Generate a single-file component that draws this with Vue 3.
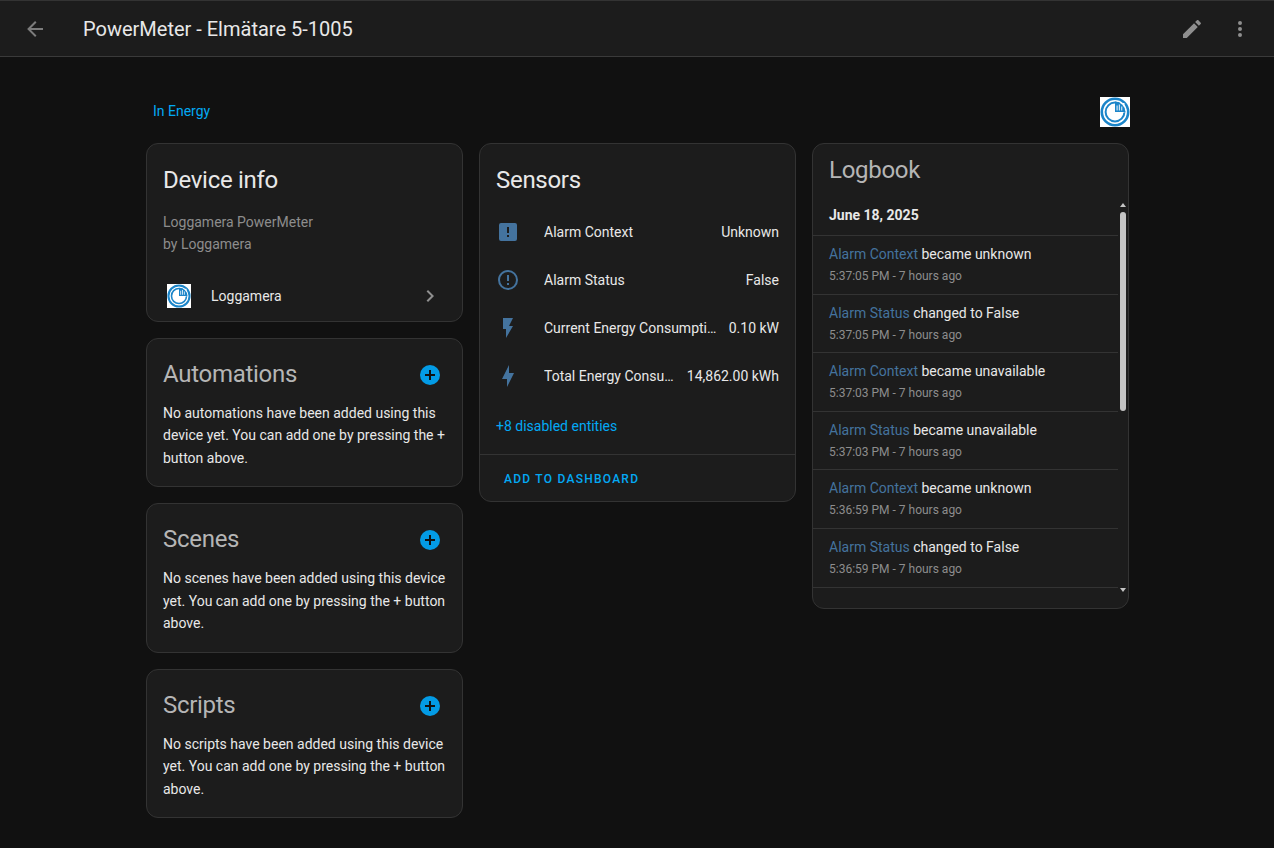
<script setup>
const sensors = [
  { name: 'Alarm Context', value: 'Unknown', icon: 'M5,3H19A2,2 0 0,1 21,5V19A2,2 0 0,1 19,21H5A2,2 0 0,1 3,19V5A2,2 0 0,1 5,3M13,13V7H11V13H13M13,17V15H11V17H13Z' },
  { name: 'Alarm Status', value: 'False', icon: 'M11,15H13V17H11V15M11,7H13V13H11V7M12,2C6.47,2 2,6.5 2,12A10,10 0 0,0 12,22A10,10 0 0,0 22,12A10,10 0 0,0 12,2M12,20A8,8 0 0,1 4,12A8,8 0 0,1 12,4A8,8 0 0,1 20,12A8,8 0 0,1 12,20Z' },
  { name: 'Current Energy Consumption', value: '0.10 kW', icon: 'M7,2V13H10V22L17,10H13L17,2H7Z' },
  { name: 'Total Energy Consumption', value: '14,862.00 kWh', icon: 'M11 15H6L13 1V9H18L11 23V15Z' }
];

const emptyCards = [
  { title: 'Automations', text: 'No automations have been added using this device yet. You can add one by pressing the + button above.' },
  { title: 'Scenes', text: 'No scenes have been added using this device yet. You can add one by pressing the + button above.' },
  { title: 'Scripts', text: 'No scripts have been added using this device yet. You can add one by pressing the + button above.' }
];

const logEntries = [
  { name: 'Alarm Context', action: 'became unknown', time: '5:37:05 PM - 7 hours ago' },
  { name: 'Alarm Status', action: 'changed to False', time: '5:37:05 PM - 7 hours ago' },
  { name: 'Alarm Context', action: 'became unavailable', time: '5:37:03 PM - 7 hours ago' },
  { name: 'Alarm Status', action: 'became unavailable', time: '5:37:03 PM - 7 hours ago' },
  { name: 'Alarm Context', action: 'became unknown', time: '5:36:59 PM - 7 hours ago' },
  { name: 'Alarm Status', action: 'changed to False', time: '5:36:59 PM - 7 hours ago' }
];
</script>

<template>
  <div class="page">
    <header class="topbar">
      <svg class="icon back" viewBox="0 0 24 24"><path d="M20,11V13H8L13.5,18.5L12.08,19.92L4.16,12L12.08,4.08L13.5,5.5L8,11H20Z" /></svg>
      <div class="page-title">PowerMeter - Elmätare 5-1005</div>
      <svg class="icon edit" viewBox="0 0 24 24"><path d="M20.71,7.04C21.1,6.65 21.1,6 20.71,5.63L18.37,3.29C18,2.9 17.35,2.9 16.96,3.29L15.12,5.12L18.87,8.87M3,17.25V21H6.75L17.81,9.93L14.06,6.18L3,17.25Z" /></svg>
      <svg class="icon more" viewBox="0 0 24 24"><path d="M12,16A2,2 0 0,1 14,18A2,2 0 0,1 12,20A2,2 0 0,1 10,18A2,2 0 0,1 12,16M12,10A2,2 0 0,1 14,12A2,2 0 0,1 12,14A2,2 0 0,1 10,12A2,2 0 0,1 12,10M12,4A2,2 0 0,1 14,6A2,2 0 0,1 12,8A2,2 0 0,1 10,6A2,2 0 0,1 12,4Z" /></svg>
    </header>

    <main class="content">
      <div class="area-row">
        <a class="link">In Energy</a>
        <svg class="logo logo-big" viewBox="0 0 30 30">
          <rect width="30" height="30" fill="#fff" />
          <circle cx="15" cy="15" r="13.2" fill="none" stroke="#1b85c9" stroke-width="2.6" />
          <circle cx="15" cy="15" r="9.4" fill="none" stroke="#1b85c9" stroke-width="2" />
          <path d="M15 6h9.5v9.5H15z" fill="#fff" />
          <path d="M15 4.6A10.4 10.4 0 0 1 25.4 15H15z" fill="#1b85c9" />
          <path d="M16.5 8.5h1.2v5h-1.2zM18.8 7.5h1.2v6h-1.2zM21.1 9.5h1.2v4h-1.2z" fill="#cfe6f5" />
        </svg>
      </div>

      <div class="columns">
        <div class="column">
          <section class="card device">
            <h1>Device info</h1>
            <div class="model">Loggamera PowerMeter<br />by Loggamera</div>
            <div class="integration">
              <svg class="logo logo-small" viewBox="0 0 30 30">
                <rect width="30" height="30" fill="#fff" />
                <circle cx="15" cy="15" r="13.2" fill="none" stroke="#1b85c9" stroke-width="2.6" />
                <circle cx="15" cy="15" r="9.4" fill="none" stroke="#1b85c9" stroke-width="2" />
                <path d="M15 6h9.5v9.5H15z" fill="#fff" />
                <path d="M15 4.6A10.4 10.4 0 0 1 25.4 15H15z" fill="#1b85c9" />
                <path d="M16.5 8.5h1.2v5h-1.2zM18.8 7.5h1.2v6h-1.2zM21.1 9.5h1.2v4h-1.2z" fill="#cfe6f5" />
              </svg>
              <span class="integration-name">Loggamera</span>
              <svg class="icon chevron" viewBox="0 0 24 24"><path d="M8.59,16.58L13.17,12L8.59,7.41L10,6L16,12L10,18L8.59,16.58Z" /></svg>
            </div>
          </section>

          <section v-for="card in emptyCards" :key="card.title" class="card empty">
            <div class="empty-head">
              <h1 class="dim">{{ card.title }}</h1>
              <svg class="plus" viewBox="0 0 24 24">
                <circle cx="12" cy="12" r="10" fill="#039be5" />
                <path d="M17,13H13V17H11V13H7V11H11V7H13V11H17Z" fill="#111" />
              </svg>
            </div>
            <p>{{ card.text }}</p>
          </section>
        </div>

        <div class="column">
          <section class="card sensors">
            <h1>Sensors</h1>
            <div class="sensor-list">
              <div v-for="s in sensors" :key="s.name" class="sensor">
                <svg class="icon state" viewBox="0 0 24 24"><path :d="s.icon" /></svg>
                <span class="sensor-name">{{ s.name }}</span>
                <span class="sensor-value">{{ s.value }}</span>
              </div>
            </div>
            <a class="link disabled">+8 disabled entities</a>
            <div class="actions"><a class="add">ADD TO DASHBOARD</a></div>
          </section>
        </div>

        <div class="column">
          <section class="card logbook">
            <h1 class="dim">Logbook</h1>
            <div class="log-scroll">
              <div class="log-date">June 18, 2025</div>
              <div v-for="(e, i) in logEntries" :key="i" class="log-entry">
                <div><span class="entity">{{ e.name }}</span> {{ e.action }}</div>
                <div class="log-time">{{ e.time }}</div>
              </div>
            </div>
            <div class="scroll-up"></div>
            <div class="scroll-thumb"></div>
            <div class="scroll-down"></div>
          </section>
        </div>
      </div>
    </main>
  </div>
</template>

<style>
html,
body {
  margin: 0;
  background: #111111;
}
</style>

<style scoped>
.page {
  min-height: 848px;
  background: #111111;
  color: #e8e8e8;
  font-family: Roboto, "Noto Sans", sans-serif;
  font-size: 14px;
}

.topbar {
  display: flex;
  align-items: center;
  height: 55px;
  background: #1c1c1c;
  border-top: 1px solid #333;
  border-bottom: 1px solid #3a3a3a;
  box-sizing: content-box;
}

.icon {
  width: 24px;
  height: 24px;
  fill: #8f8f8f;
  flex: none;
}

.back {
  margin-left: 23px;
  fill: #7c7c7c;
}

.page-title {
  flex: 1;
  margin-left: 36px;
  font-size: 20px;
  color: #e8e8e8;
}

.more {
  margin: 0 22px 0 24px;
}

.content {
  width: 984px;
  margin-left: 146px;
  padding-top: 40px;
}

.area-row {
  display: flex;
  align-items: center;
  justify-content: space-between;
  height: 30px;
  margin-bottom: 16px;
  padding-left: 7px;
}

.link {
  color: #03a9f4;
  font-size: 14px;
}

.area-row .link {
  margin-top: -2px;
}

.logo {
  display: block;
  flex: none;
}

.logo-big {
  width: 30px;
  height: 30px;
}

.logo-small {
  width: 24px;
  height: 24px;
}

.columns {
  display: grid;
  grid-template-columns: repeat(3, 317px);
  gap: 16px;
  align-items: start;
}

.column {
  display: flex;
  flex-direction: column;
  gap: 16px;
}

.card {
  box-sizing: border-box;
  background: #1c1c1c;
  border: 1px solid #333;
  border-radius: 12px;
}

h1 {
  margin: 0;
  font-size: 24px;
  font-weight: 400;
  letter-spacing: -0.29px;
  line-height: 32px;
  color: #e8e8e8;
}

h1.dim {
  color: #b5b5b5;
}

.device {
  height: 179px;
  padding: 20px 16px 0;
}

.model {
  margin-top: 15px;
  line-height: 22px;
  color: #8d8d8d;
}

.integration {
  display: flex;
  align-items: center;
  margin-top: 29px;
  padding-left: 4px;
}

.integration-name {
  flex: 1;
  margin-left: 20px;
}

.chevron {
  margin-right: 4px;
}

.empty {
  height: 149.4px;
  padding: 19px 16px 0;
}

.empty-head {
  display: flex;
  align-items: center;
  justify-content: space-between;
}

.plus {
  width: 24px;
  height: 24px;
  margin-right: 4px;
  margin-top: 2px;
}

.empty p {
  margin: 12px 0 0;
  line-height: 22.4px;
}

.sensors {
  height: 359px;
  padding-top: 20px;
}

.sensors h1 {
  padding: 0 16px;
}

.sensor-list {
  margin-top: 12px;
  padding: 0 16px;
}

.sensor {
  display: flex;
  align-items: center;
  height: 48px;
}

.state {
  fill: #44739e;
  margin-right: 24px;
}

.sensor-name {
  flex: 1;
  min-width: 0;
  white-space: nowrap;
  overflow: hidden;
  text-overflow: ellipsis;
}

.sensor-value {
  flex: none;
  margin-left: 8px;
}

.disabled {
  display: block;
  margin: 18px 16px 0;
}

.actions {
  margin-top: 20px;
  padding: 15px 24px 0;
  border-top: 1px solid #333;
}

.add {
  color: #03a9f4;
  font-size: 12px;
  font-weight: 500;
  letter-spacing: 1.25px;
}

.logbook {
  position: relative;
  height: 466px;
  padding-top: 10px;
}

.logbook h1 {
  padding: 0 16px;
}

.log-scroll {
  margin-top: 14px;
  margin-right: 10px;
  height: 388px;
  overflow: hidden;
}

.log-date {
  height: 36px;
  box-sizing: border-box;
  padding: 7px 16px 0;
  font-weight: 700;
  border-bottom: 1px solid #333;
}

.log-entry {
  box-sizing: border-box;
  height: 58.6px;
  padding: 8px 16px 0;
  line-height: 20px;
  border-bottom: 1px solid #333;
}

.entity {
  color: #44739e;
}

.log-time {
  margin-top: 2px;
  font-size: 12px;
  color: #8d8d8d;
}

.scroll-thumb {
  position: absolute;
  top: 68px;
  left: 307px;
  width: 6px;
  height: 199px;
  border-radius: 3px;
  background: #c4c4c4;
}

.scroll-up,
.scroll-down {
  position: absolute;
  left: 307px;
  width: 0;
  height: 0;
  border-left: 3px solid transparent;
  border-right: 3px solid transparent;
}

.scroll-up {
  top: 59px;
  border-bottom: 4px solid #c4c4c4;
}

.scroll-down {
  top: 444px;
  border-top: 4px solid #c4c4c4;
}
</style>
